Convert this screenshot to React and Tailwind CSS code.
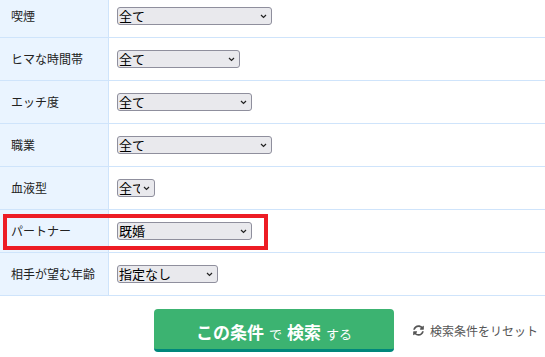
import React from "react";
import { FaSyncAlt } from "react-icons/fa";

const rows = [
    { label: "喫煙", value: "全て", width: "w-[155px]" },
    { label: "ヒマな時間帯", value: "全て", width: "w-[123px]" },
    { label: "エッチ度", value: "全て", width: "w-[135px]" },
    { label: "職業", value: "全て", width: "w-[155px]" },
    { label: "血液型", value: "全て", width: "w-[38px]" },
    { label: "パートナー", value: "既婚", width: "w-[135px]", marked: true },
    { label: "相手が望む年齢", value: "指定なし", width: "w-[101px]" },
];

// 小さいセレクト（矢印は自前で描く）
function Select({ value, width }) {
    return (
        <div className={`relative ${width} h-[18px]`}>
            <select
                defaultValue={value}
                className="block appearance-none w-full h-full py-0 pl-[1px] pr-[14px] text-[13px] leading-[16px] bg-[#e9e9ed] border border-[#8f8f9d] rounded-[3px] text-black"
            >
                <option>{value}</option>
            </select>
            <svg
                className="absolute right-[5px] top-[7px] pointer-events-none"
                width="7"
                height="5"
                viewBox="0 0 7 5"
            >
                <path d="M1 1 L3.5 3.5 L6 1" fill="none" stroke="#222" strokeWidth="1.2" />
            </svg>
        </div>
    );
}

function App() {
    return (
        <div
            className="w-[545px] h-[357px] overflow-hidden bg-white text-[#222]"
            style={{ fontFamily: '"Noto Sans CJK JP", "Noto Sans", sans-serif' }}
        >
            {/* 条件テーブル（上部は少しスクロール済み） */}
            <div className="-mt-[5px]">
                {rows.map((row, index) => (
                    <div
                        key={index}
                        className="relative flex h-[43px] border-b border-[#cfe4fb]"
                    >
                        <div className="w-[109px] shrink-0 flex items-center pl-[11px] bg-[#eaf4ff] border-r border-[#cfe4fb] text-[12px]">
                            {row.label}
                        </div>
                        <div className="flex-1 flex items-center pl-[8px]">
                            <Select value={row.value} width={row.width} />
                        </div>
                        {row.marked && (
                            <div className="absolute left-[3px] top-[4px] w-[265px] h-[36px] border-4 border-[#ed1c24] pointer-events-none" />
                        )}
                    </div>
                ))}
            </div>

            {/* 検索ボタン */}
            <div className="grid grid-cols-[1fr_auto_1fr] items-center mt-[13px]">
                <div />
                <button className="w-[240px] h-[43px] ml-[3px] rounded-[4px] bg-[#3cb371] border-b-[3px] border-[#00877b] text-white flex items-end justify-center pb-[9px]">
                    <span className="text-[17px] font-bold leading-none">この条件</span>
                    <span className="text-[13px] leading-none mx-[5px]">で</span>
                    <span className="text-[17px] font-bold leading-none">検索</span>
                    <span className="text-[13px] leading-none ml-[5px]">する</span>
                </button>
                <div className="flex items-center pl-[19px] text-[12px] text-[#555]">
                    <FaSyncAlt className="w-[11px] h-[11px] mr-[6px]" />
                    検索条件をリセット
                </div>
            </div>
        </div>
    );
}

export default App;
